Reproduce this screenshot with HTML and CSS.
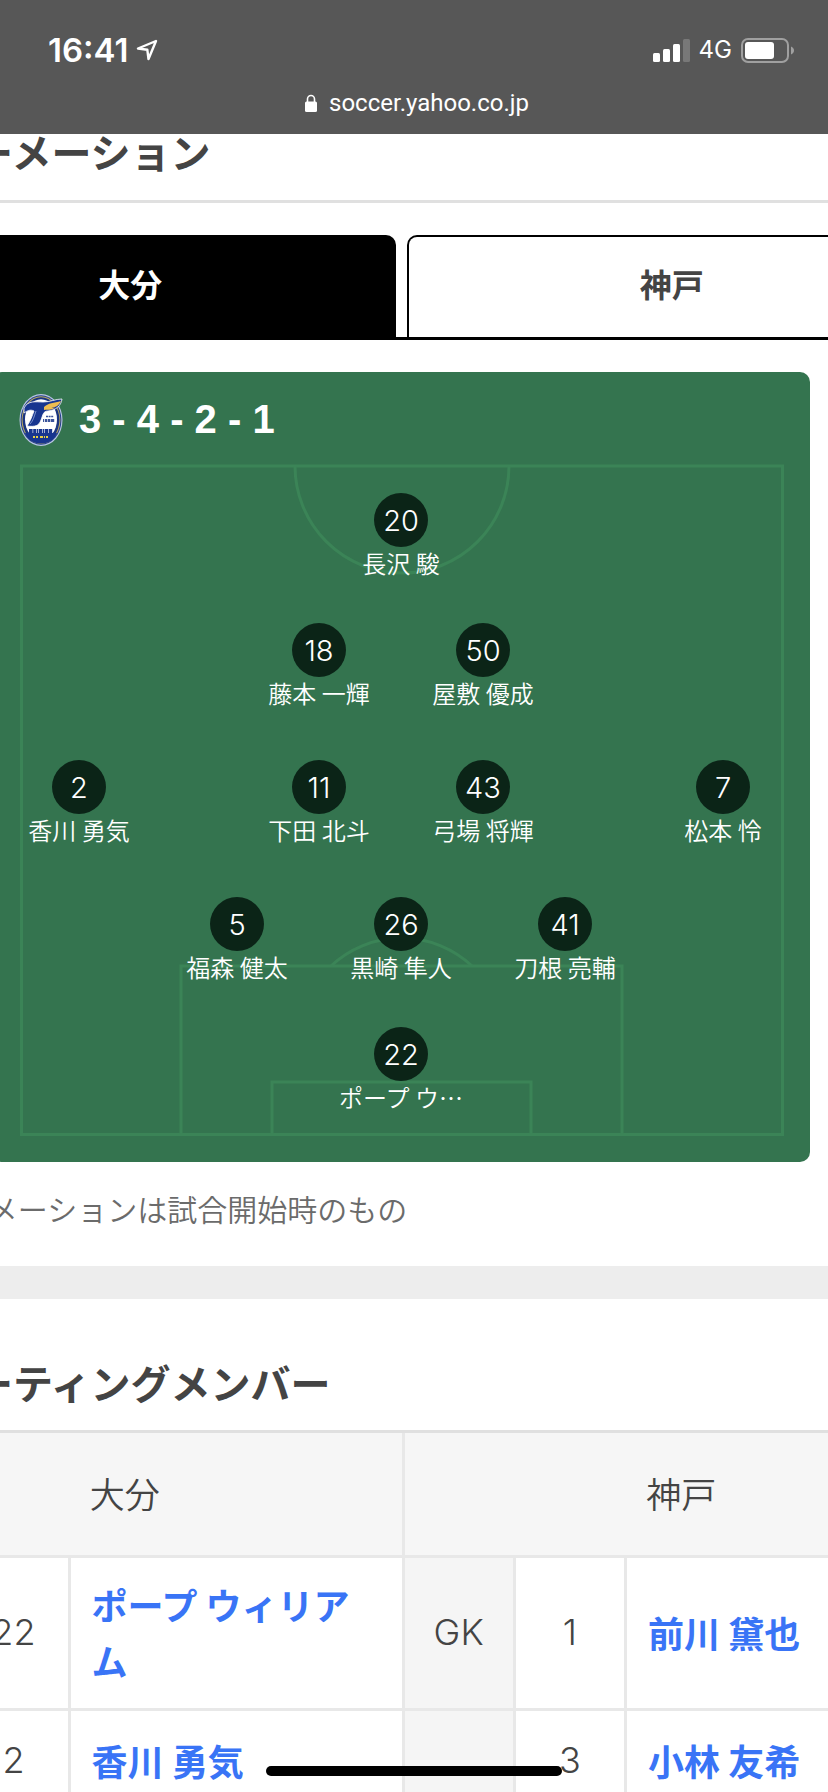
FILE: index.html
```html
<!DOCTYPE html>
<html lang="ja">
<head>
<meta charset="utf-8">
<meta name="viewport" content="width=device-width">
<title>soccer.yahoo.co.jp</title>
<link rel="stylesheet" href="styles.css">
</head>
<body>
<header class="browser">
  <div class="status">
    <div class="status-left">
      <time class="clock">16:41</time>
      <svg class="arrow" viewBox="0 0 22 22" aria-hidden="true"><path d="M20 2 2 9.500l9.300 1.200L12.500 20z"/></svg>
    </div>
    <div class="status-right">
      <svg class="signal" viewBox="0 0 37 23" aria-hidden="true">
        <rect x="0" y="14" width="7" height="9" rx="1.500"/><rect x="10" y="10" width="7" height="13" rx="1.500"/>
        <rect x="20" y="5" width="7" height="18" rx="1.500"/><rect x="30" y="0" width="7" height="23" rx="1.500" opacity=".2"/>
      </svg>
      <span class="network">4G</span>
      <svg class="battery" viewBox="0 0 53 25" aria-hidden="true">
        <rect x="1" y="1" width="46" height="23" rx="6" fill="none" stroke="#a0a0a0" stroke-width="2"/>
        <rect x="4" y="4" width="29" height="17" rx="3" fill="#fff"/>
        <path d="M50 8.500c4 1.500 4 6.500 0 8z" fill="#a0a0a0"/>
      </svg>
    </div>
  </div>
  <div class="address">
    <svg class="lock" viewBox="0 0 12 18" aria-hidden="true"><rect y="7.500" width="12" height="10.500" rx="1.500" fill="#fff"/><path d="M2.500 8V5a3.500 3.500 0 0 1 7 0v3" fill="none" stroke="#fff" stroke-width="1.600"/></svg>
    <span>soccer.yahoo.co.jp</span>
  </div>
</header>

<main class="page">
  <section>
    <h2 class="heading">フォーメーション</h2>
    <div class="tabs" role="tablist">
      <button class="tab tab-active" role="tab" aria-selected="true">大分</button>
      <button class="tab" role="tab" aria-selected="false">神戸</button>
    </div>
    <div class="board">
      <svg class="lines" viewBox="0 0 818 790" preserveAspectRatio="none" aria-hidden="true">
        <rect x="29.500" y="94" width="761" height="668.500"/>
        <path d="M303 94a107 107 0 0 0 214 0"/>
        <path d="M189 762V594H630V762"/>
        <path d="M280 762V710H539V762"/>
        <path d="M339 594a103 103 0 0 1 141 0"/>
      </svg>
      <div class="board-head">
        <svg class="crest" viewBox="0 0 44 52" role="img" aria-label="大分トリニータ">
          <ellipse cx="22" cy="26" rx="21.500" ry="26" fill="#b9c6e2"/>
          <ellipse cx="22" cy="26" rx="20.400" ry="24.700" fill="#24418f"/>
          <ellipse cx="22" cy="26" rx="19.400" ry="23.700" fill="#b8a760"/>
          <ellipse cx="22" cy="26" rx="18.400" ry="22.700" fill="#1b3580"/>
          <ellipse cx="22" cy="25.500" rx="16" ry="20.300" fill="#fff"/>
          <path d="M6 39h32c-2 6-8 10.500-16 10.500S8 45 6 39z" fill="#17358f"/>
          <path d="M5 14C9 6 17 8 24 8c8 0 12-3 19-3-1 7-6 11-14 12-5 0-5 4-7 9-2 6-6 7-14 6 4-6 5-10 7-15-4-2-7 0-10 2z" fill="#17358f" stroke="#fff" stroke-width=".8"/>
          <path d="M25 13c4-4 10-4 17-6-2 5-7 7-11 7 2 0 4 0 5-.500-3 3-8 2-11 2.500z" fill="#eebd50"/>
          <path d="M17 17c-2 6-3 10-6 13" fill="none" stroke="#91a7dc" stroke-width=".8"/>
          <path d="M27 22.500h2m.6 0h2m.6 0h2" stroke="#3c549b" stroke-width="1.600"/>
          <path d="M24 26.500h1m.8 0h2.400m.6 0h2.400m.6 0h3.400" stroke="#3c549b" stroke-width="3"/>
          <path d="M10 37h3.600m.6 0h3m.6 0h1.400m.6 0h3.600m.6 0h1.400m.6 0h3m.6 0h3.600" stroke="#17358f" stroke-width="4"/>
          <path d="M14 43h2m1 0h2m2 0h3m1 0h1m1 0h2" stroke="#e8cf45" stroke-width="2"/>
        </svg>
        <p class="system">3 - 4 - 2 - 1</p>
      </div>
      <div class="formation">
        <div class="line"><div class="player"><span class="number">20</span><span class="name">長沢 駿</span></div></div>
        <div class="line">
          <div class="player"><span class="number">18</span><span class="name">藤本 一輝</span></div>
          <div class="player"><span class="number">50</span><span class="name">屋敷 優成</span></div>
        </div>
        <div class="line line-wide">
          <div class="player"><span class="number">2</span><span class="name">香川 勇気</span></div>
          <div class="player"><span class="number">11</span><span class="name">下田 北斗</span></div>
          <div class="player"><span class="number">43</span><span class="name">弓場 将輝</span></div>
          <div class="player"><span class="number">7</span><span class="name">松本 怜</span></div>
        </div>
        <div class="line">
          <div class="player"><span class="number">5</span><span class="name">福森 健太</span></div>
          <div class="player"><span class="number">26</span><span class="name">黒崎 隼人</span></div>
          <div class="player"><span class="number">41</span><span class="name">刀根 亮輔</span></div>
        </div>
        <div class="line"><div class="player"><span class="number">22</span><span class="name">ポープ ウ…</span></div></div>
      </div>
    </div>
    <p class="note">※フォーメーションは試合開始時のもの</p>
  </section>

  <section class="members">
    <h2 class="heading heading-members">スターティングメンバー</h2>
    <table class="lineup">
      <colgroup><col class="narrow"><col class="narrow"><col><col class="narrow"><col class="narrow"><col></colgroup>
      <thead>
        <tr><th colspan="3" scope="colgroup">大分</th><th colspan="3" scope="colgroup">神戸</th></tr>
      </thead>
      <tbody>
        <tr><td class="position"></td><td>22</td><td class="who"><a href="#">ポープ ウィリアム</a></td><td class="position">GK</td><td>1</td><td class="who"><a href="#">前川 黛也</a></td></tr>
        <tr><td class="position"></td><td>2</td><td class="who"><a href="#">香川 勇気</a></td><td class="position"></td><td>3</td><td class="who"><a href="#">小林 友希</a></td></tr>
      </tbody>
    </table>
  </section>
</main>
<div class="home-bar"></div>
</body>
</html>
```

FILE: styles.css
```css
* { box-sizing: border-box; }

html { height: 100%; overflow: hidden; }

body {
  margin: 0;
  height: 100%;
  overflow: hidden;
  background: #fff;
  color: #444;
  font-family: "Noto Sans CJK JP", sans-serif;
}

h2, p { margin: 0; }

/* Browser chrome */
.browser {
  height: 134px;
  padding-top: 30px;
  background: #575757;
  color: #fff;
  font-family: Inter, sans-serif;
}

.status, .status-left, .status-right, .address { display: flex; align-items: center; }
.status { justify-content: space-between; height: 40px; padding: 0 34px 0 48px; }
.status-left { gap: 8px; }
.status-right { gap: 9px; }
.clock { font-size: 33px; font-weight: 600; line-height: 40px; }
.arrow { width: 22px; height: 22px; fill: none; stroke: #fff; stroke-width: 2.4; stroke-linejoin: round; }
.signal { width: 37px; height: 23px; fill: #fff; }
.network { font-size: 24px; font-weight: 400; line-height: 32px; }
.battery { width: 53px; height: 25px; }
.address { justify-content: center; gap: 12px; height: 32px; margin-top: 17px; padding-left: 6px; font: 24px/32px Roboto, sans-serif; }
.lock { width: 12px; height: 18px; }

/* The page is zoomed in, so it runs past both sides of the window */
.page { margin: 0 -129px 0 -155px; }

.heading {
  height: 69px;
  padding-left: 48px;
  border-bottom: 3px solid #e0e0e0;
  font-size: 40px;
  font-weight: 700;
  line-height: 34px;
}

.tabs {
  display: flex;
  gap: 11px;
  margin-top: 32px;
  padding: 0 20px;
  border-bottom: 3px solid #000;
}

.tab {
  flex: 1;
  height: 102px;
  padding: 0 0 8px;
  border: 2px solid #000;
  border-bottom: 0;
  border-radius: 10px 10px 0 0;
  background: #fff;
  color: #444;
  font: 700 32px/48px "Noto Sans CJK JP", sans-serif;
}

.tab-active { background: #000; color: #fff; }

/* Formation board */
.board {
  position: relative;
  max-width: 818px;
  margin: 32px auto 0;
  padding: 22px 0 49px;
  border-radius: 10px;
  background: #34744f;
  color: #fff;
}

.lines {
  position: absolute;
  inset: 0;
  width: 100%;
  height: 100%;
  fill: none;
  stroke: #3b8457;
  stroke-width: 3;
}

.board-head { position: relative; display: flex; align-items: center; gap: 16px; height: 52px; padding-left: 27px; }
.crest { width: 44px; height: 52px; }
.system { padding-bottom: 2px; font: 700 40px/48px "Liberation Sans", sans-serif; }

.formation { position: relative; display: flex; flex-direction: column; gap: 44px; margin-top: 47px; }
.line { display: flex; justify-content: center; }
.line-wide { padding: 7px 5px; }
.line-wide .player:first-child { margin-right: auto; }
.line-wide .player:last-child { margin-left: auto; }
.player { display: flex; flex-direction: column; align-items: center; width: 164px; }

.number {
  width: 54px;
  height: 54px;
  border-radius: 50%;
  background: rgba(9, 31, 20, 0.94);
  font: 300 29px/56px Inter, sans-serif;
  text-align: center;
}

.name { font-size: 24px; font-weight: 350; line-height: 32px; white-space: nowrap; }

.note {
  padding: 22px 0 34px 24px;
  color: #6b6b6b;
  font-size: 30px;
  font-weight: 350;
  line-height: 48px;
}

/* Starting members */
.members { margin-right: -4px; border-top: 33px solid #ededed; }
.heading-members { height: 134px; padding-top: 66px; }

.lineup {
  width: 100%;
  border-collapse: collapse;
  table-layout: fixed;
  color: #444;
  font: 300 36px/56px Inter, "Noto Sans CJK JP", sans-serif;
}

.narrow { width: 10%; }
.lineup th, .lineup td { border: 3px solid #e8e8e8; border-top: 0; padding: 18px 0 20px; text-align: center; }
.lineup th { height: 123px; background: #f6f6f6; font-family: "Noto Sans CJK JP", sans-serif; font-size: 35px; font-weight: 350; }
.lineup td { height: 104px; }
.lineup .position { background: #f5f5f5; }
.lineup .who { padding: 18px 21px 20px; font-family: "Noto Sans CJK JP", sans-serif; font-weight: 700; text-align: left; }
.who a { color: #3974f6; text-decoration: none; word-break: break-all; }

.home-bar {
  position: fixed;
  bottom: 16px;
  left: 50%;
  width: 296px;
  height: 10px;
  margin-left: -148px;
  border-radius: 5px;
  background: #000;
}
```
